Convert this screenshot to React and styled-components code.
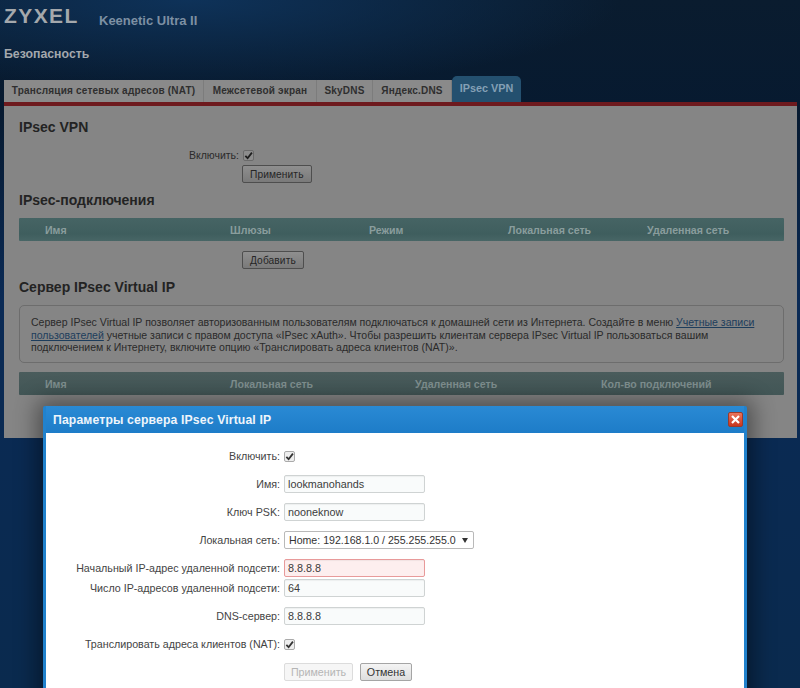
import React from "react";
import styled, { createGlobalStyle } from "styled-components";

const Global = createGlobalStyle`
  html, body { margin: 0; padding: 0; }
  body { font-family: "Liberation Sans", Arial, sans-serif; }
`;

const Page = styled.div`
  position: relative;
  width: 800px;
  height: 688px;
  overflow: hidden;
  background:
    radial-gradient(ellipse 430px 90px at 190px 0, #0e3259 0%, rgba(14, 50, 89, 0) 100%),
    linear-gradient(180deg, #0a1c2f 0, #071a30 110px, #0a2a55 300px, #0a2a4e 688px);
`;

const Header = styled.header`
  display: flex;
  align-items: center;
  height: 40px;
  padding-left: 4px;
`;

const Logo = styled.div`
  width: 95px;
  margin-top: -8px;
  font-size: 21px;
  font-weight: 700;
  letter-spacing: 1.4px;
  color: #a4a8ac;
`;

const Model = styled.div`
  font-size: 13px;
  font-weight: 700;
  color: #7d90a3;
`;

const PageTitle = styled.h1`
  margin: 7px 0 0 4px;
  height: 29px;
  font-size: 12.3px;
  line-height: 15px;
  font-weight: 700;
  color: #a3a8ad;
`;

const Tabs = styled.nav`
  display: flex;
  align-items: flex-end;
  height: 26px;
  margin-left: 4px;
`;

const Tab = styled.div`
  box-sizing: border-box;
  display: flex;
  align-items: center;
  justify-content: center;
  width: ${(p) => p.$w};
  height: 22px;
  padding-bottom: 1px;
  font-size: 10px;
  font-weight: 700;
  letter-spacing: 0.2px;
  color: #2f2f2f;
  background: #8a8a8a;
  border-right: 1px solid #7c7c7c;
`;

const ActiveTab = styled(Tab)`
  height: 26px;
  padding-bottom: 2px;
  font-size: 10.8px;
  letter-spacing: 0;
  color: #84a0b6;
  background: #24506f;
  border-right: none;
  border-radius: 5px 5px 0 0;
`;

const Panel = styled.main`
  box-sizing: border-box;
  width: 793px;
  height: 336px;
  margin: 0 4px;
  padding: 12px 13px 0 15px;
  background: #858585;
  border-top: 4px solid #6e1a1e;
`;

const Heading = styled.h2`
  margin: ${(p) => p.$mt || "0"} 0 0;
  font-size: 14px;
  line-height: 18px;
  font-weight: 700;
  color: #232323;
`;

const FieldLine = styled.div`
  display: grid;
  grid-template-columns: 220px auto;
  justify-content: start;
  column-gap: 4px;
  align-items: center;
  margin-top: 13px;
`;

const LineLabel = styled.span`
  text-align: right;
  font-size: 10.5px;
  color: #2b2b2b;
`;

const ButtonLine = styled.div`
  display: flex;
  margin-top: ${(p) => p.$mt};
  padding-left: 223px;
`;

const DarkCheck = styled.span`
  display: inline-flex;
  align-items: center;
  justify-content: center;
  width: 9px;
  height: 9px;
  background: #8d8d8d;
  border: 1px solid #6a6a6a;
  border-radius: 2px;
`;

const DarkButton = styled.div`
  box-sizing: border-box;
  display: flex;
  align-items: center;
  height: 18px;
  padding: 0 7px;
  font-size: 10.2px;
  letter-spacing: 0.1px;
  color: #262626;
  background: linear-gradient(180deg, #8f8f8f, #7a7a7a);
  border: 1px solid #4e4e4e;
  border-radius: 2px;
`;

const TableHead = styled.div`
  display: grid;
  grid-template-columns: ${(p) => p.$cols};
  align-items: center;
  box-sizing: border-box;
  height: 23px;
  margin-top: ${(p) => p.$mt};
  padding-left: 26px;
  font-size: 10.6px;
  font-weight: 700;
  color: ${(p) => (p.$dim ? "#7f8f8f" : "#8a9d9d")};
  background: ${(p) =>
    p.$dim
      ? "linear-gradient(180deg, #4a5c5c, #425656)"
      : "linear-gradient(180deg, #466464, #3f5e5e 70%, #486666)"};
  border-radius: 1px;
`;

const InfoBox = styled.div`
  box-sizing: border-box;
  height: 58px;
  margin-top: 9px;
  padding: 10px 10px 0 11px;
  font-size: 10.55px;
  line-height: 12.5px;
  color: #2a2a2a;
  border: 1px solid #6d6d6d;
  border-radius: 5px;
`;

const Anchor = styled.a`
  color: #1d3d5c;
  text-decoration: underline;
`;

const Dialog = styled.section`
  position: absolute;
  left: 43px;
  top: 406px;
  box-sizing: border-box;
  width: 704px;
  height: 300px;
  padding: 0 3px;
  background: #2182cd;
  border-radius: 2px 2px 0 0;
  box-shadow: 0 0 22px 6px rgba(0, 0, 0, 0.42);
`;

const DialogBar = styled.div`
  display: flex;
  align-items: center;
  justify-content: space-between;
  height: 27px;
  padding: 0 1px 0 7px;
  background: linear-gradient(180deg, #2a8ad4, #1d7cc8);
`;

const DialogTitle = styled.h3`
  margin: 0;
  font-size: 12.2px;
  font-weight: 700;
  letter-spacing: 0.15px;
  color: #eef5fb;
`;

const Close = styled.div`
  box-sizing: border-box;
  display: flex;
  align-items: center;
  justify-content: center;
  width: 15px;
  height: 15px;
  background: linear-gradient(180deg, #e8745c, #c9361f);
  border: 1px solid #9c3a2a;
  border-radius: 2px;
`;

const DialogBody = styled.form`
  display: flex;
  flex-direction: column;
  gap: 10px;
  height: 273px;
  padding-top: 14px;
  background: #fff;
`;

const Row = styled.div`
  display: grid;
  grid-template-columns: 234px auto;
  justify-content: start;
  column-gap: 4px;
  align-items: center;
  height: 18px;
  margin-top: ${(p) => p.$mt || "0"};
`;

const Label = styled.label`
  text-align: right;
  font-size: 10.7px;
  color: #444;
  white-space: nowrap;
`;

const Input = styled.div`
  box-sizing: border-box;
  display: flex;
  align-items: center;
  width: 141px;
  height: 18px;
  padding-left: 3px;
  font-size: 10.8px;
  color: #3b3b3b;
  background: ${(p) => (p.$invalid ? "#fdeeee" : "#f9fbfb")};
  border: 1px solid ${(p) => (p.$invalid ? "#e89a9a" : "#cfd3d3")};
  border-radius: 2px;
  box-shadow: inset 0 1px 1px rgba(0, 0, 0, 0.05);
`;

const Select = styled.div`
  box-sizing: border-box;
  display: flex;
  align-items: center;
  justify-content: space-between;
  width: 190px;
  height: 18px;
  padding: 0 5px 0 4px;
  font-size: 10.6px;
  color: #333;
  background: #fff;
  border: 1px solid #b9b9b9;
  border-radius: 2px;
`;

const Arrow = styled.span`
  width: 0;
  height: 0;
  border-left: 3px solid transparent;
  border-right: 3px solid transparent;
  border-top: 5px solid #333;
`;

const LightCheck = styled.span`
  box-sizing: border-box;
  display: inline-flex;
  align-items: center;
  justify-content: center;
  width: 11px;
  height: 11px;
  background: #eee;
  border: 1px solid #aaa;
  border-radius: 2px;
`;

const Buttons = styled.div`
  display: flex;
  gap: 7px;
  margin-left: 238px;
`;

const Button = styled.div`
  box-sizing: border-box;
  display: flex;
  align-items: center;
  justify-content: center;
  width: ${(p) => p.$w};
  height: 18px;
  font-size: 10.7px;
  color: ${(p) => (p.$disabled ? "#b5b5b5" : "#333")};
  background: ${(p) => (p.$disabled ? "#f6f6f6" : "linear-gradient(180deg, #f4f4f4, #dedede)")};
  border: 1px solid ${(p) => (p.$disabled ? "#dcdcdc" : "#a5a5a5")};
  border-radius: 2px;
`;

const Tick = ({ color }) => (
  <svg width="9" height="9" viewBox="0 0 10 10">
    <path d="M1.5 5.5 L4 8 L8.8 1.8" fill="none" stroke={color} strokeWidth="2" />
  </svg>
);

export default function App() {
  return (
    <Page>
      <Global />
      <Header>
        <Logo>ZYXEL</Logo>
        <Model>Keenetic Ultra II</Model>
      </Header>
      <PageTitle>Безопасность</PageTitle>
      <Tabs>
        <Tab $w="200px">Трансляция сетевых адресов (NAT)</Tab>
        <Tab $w="113px">Межсетевой экран</Tab>
        <Tab $w="56px">SkyDNS</Tab>
        <Tab $w="79px">Яндекс.DNS</Tab>
        <ActiveTab $w="69px">IPsec VPN</ActiveTab>
      </Tabs>
      <Panel>
        <Heading>IPsec VPN</Heading>
        <FieldLine>
          <LineLabel>Включить:</LineLabel>
          <DarkCheck><Tick color="#1e1e1e" /></DarkCheck>
        </FieldLine>
        <ButtonLine $mt="4px">
          <DarkButton>Применить</DarkButton>
        </ButtonLine>
        <Heading $mt="8px">IPsec-подключения</Heading>
        <TableHead $mt="9px" $cols="185px 139px 139px 139px 139px">
          <span>Имя</span><span>Шлюзы</span><span>Режим</span><span>Локальная сеть</span><span>Удаленная сеть</span>
        </TableHead>
        <ButtonLine $mt="10px">
          <DarkButton>Добавить</DarkButton>
        </ButtonLine>
        <Heading $mt="9px">Сервер IPsec Virtual IP</Heading>
        <InfoBox>
          Сервер IPsec Virtual IP позволяет авторизованным пользователям подключаться к домашней сети из Интернета. Создайте в меню <Anchor>Учетные записи пользователей</Anchor> учетные записи с правом доступа «IPsec xAuth». Чтобы разрешить клиентам сервера IPsec Virtual IP пользоваться вашим подключением к Интернету, включите опцию «Транслировать адреса клиентов (NAT)».
        </InfoBox>
        <TableHead $dim $mt="9px" $cols="185px 185px 186px 1fr">
          <span>Имя</span><span>Локальная сеть</span><span>Удаленная сеть</span><span>Кол-во подключений</span>
        </TableHead>
      </Panel>
      <Dialog>
        <DialogBar>
          <DialogTitle>Параметры сервера IPsec Virtual IP</DialogTitle>
          <Close>
            <svg width="11" height="11" viewBox="0 0 11 11">
              <path d="M2 2 L9 9 M9 2 L2 9" stroke="#fff" strokeWidth="2.2" />
            </svg>
          </Close>
        </DialogBar>
        <DialogBody>
          <Row><Label>Включить:</Label><LightCheck><Tick color="#333" /></LightCheck></Row>
          <Row><Label>Имя:</Label><Input>lookmanohands</Input></Row>
          <Row><Label>Ключ PSK:</Label><Input>nooneknow</Input></Row>
          <Row><Label>Локальная сеть:</Label><Select>Home: 192.168.1.0 / 255.255.255.0<Arrow /></Select></Row>
          <Row><Label>Начальный IP-адрес удаленной подсети:</Label><Input $invalid>8.8.8.8</Input></Row>
          <Row $mt="-8px"><Label>Число IP-адресов удаленной подсети:</Label><Input>64</Input></Row>
          <Row><Label>DNS-сервер:</Label><Input>8.8.8.8</Input></Row>
          <Row><Label>Транслировать адреса клиентов (NAT):</Label><LightCheck><Tick color="#333" /></LightCheck></Row>
          <Buttons>
            <Button $disabled $w="69px">Применить</Button>
            <Button $w="52px">Отмена</Button>
          </Buttons>
        </DialogBody>
      </Dialog>
    </Page>
  );
}
